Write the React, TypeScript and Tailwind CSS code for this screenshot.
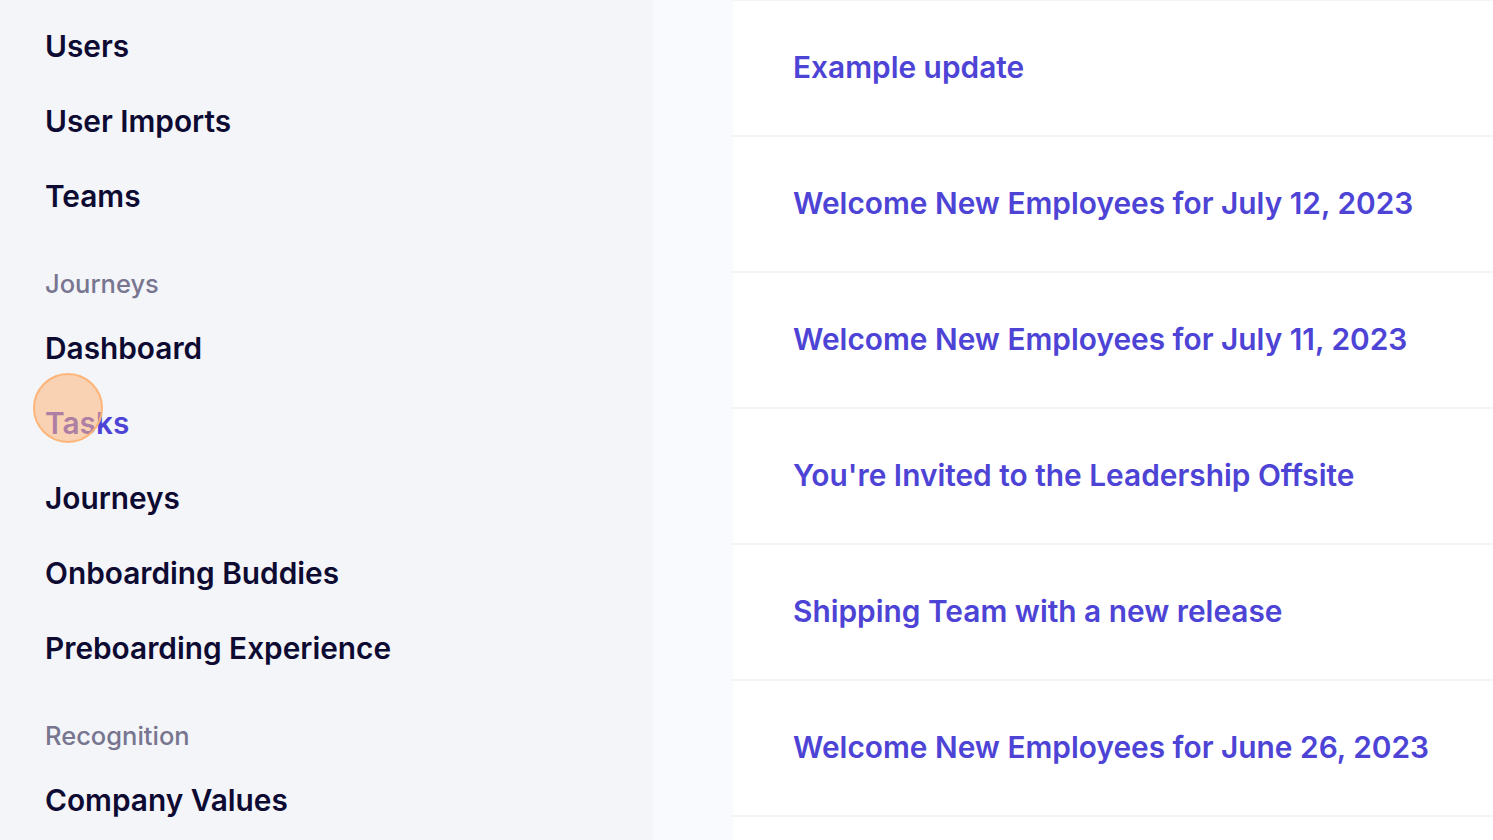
import React from "react";

const groups = [
    { title: null, items: ["Users", "User Imports", "Teams"] },
    {
        title: "Journeys",
        items: ["Dashboard", "Tasks", "Journeys", "Onboarding Buddies", "Preboarding Experience"],
    },
    { title: "Recognition", items: ["Company Values"] },
];

const updates = [
    "Example update",
    "Welcome New Employees for July 12, 2023",
    "Welcome New Employees for July 11, 2023",
    "You're Invited to the Leadership Offsite",
    "Shipping Team with a new release",
    "Welcome New Employees for June 26, 2023",
];

function Sidebar() {
    return (
        <aside className="w-[653px] shrink-0 bg-[#f4f5f9] pt-[9px] pl-[45px]">
            {groups.map((group, i) => (
                <div key={i}>
                    {group.title && (
                        <div className="h-[77px] pt-[34px] text-[25.5px] leading-[32px] font-medium text-[#77758f]">
                            {group.title}
                        </div>
                    )}
                    {group.items.map((item) => (
                        <div
                            key={item}
                            className={
                                "h-[75px] flex items-center text-[29.8px] font-semibold " +
                                (item === "Tasks" ? "text-[#4d44d6]" : "text-[#0e0b33]")
                            }
                        >
                            {item}
                        </div>
                    ))}
                </div>
            ))}
        </aside>
    );
}

export default function App() {
    return (
        <div
            className="relative flex h-[840px] w-full overflow-hidden bg-[#f9fafd]"
            style={{ fontFamily: "Inter, 'Noto Sans', sans-serif" }}
        >
            <Sidebar />
            <main className="flex-1 pl-[80px]">
                <div className="bg-white border-t border-[#f4f4f6]">
                    {updates.map((u) => (
                        <div
                            key={u}
                            className="h-[136px] flex items-center pl-[60px] pb-[2px] border-b-2 border-[#f3f3f6] text-[29.85px] font-semibold text-[#4d44d6]"
                        >
                            {u}
                        </div>
                    ))}
                    <div className="h-[136px]" />
                </div>
            </main>
            {/* click indicator */}
            <div className="absolute left-[33px] top-[373px] h-[70px] w-[70px] rounded-full border-2 border-[#fdb57a] bg-[#fdb27a]/55" />
        </div>
    );
}
